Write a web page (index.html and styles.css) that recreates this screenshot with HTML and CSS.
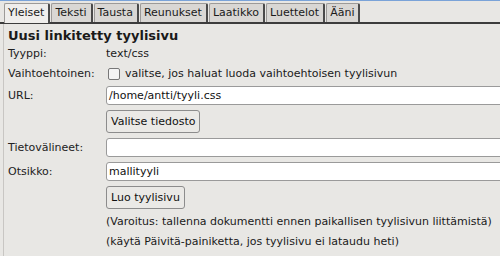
FILE: index.html
```html
<!DOCTYPE html>
<html lang="fi">
<head>
  <meta charset="UTF-8">
  <title>Uusi linkitetty tyylisivu</title>
  <link rel="stylesheet" href="styles.css">
</head>
<body>

<div class="dialog">
  <div class="tabs">
    <span class="tab active">Yleiset</span>
    <span class="tab">Teksti</span>
    <span class="tab">Tausta</span>
    <span class="tab">Reunukset</span>
    <span class="tab">Laatikko</span>
    <span class="tab">Luettelot</span>
    <span class="tab">Ääni</span>
  </div>

  <div class="panel">
    <h2>Uusi linkitetty tyylisivu</h2>

    <div class="form">
      <span class="label">Tyyppi:</span>
      <span class="value">text/css</span>

      <span class="label">Vaihtoehtoinen:</span>
      <label class="check"><span class="box"></span>valitse, jos haluat luoda vaihtoehtoisen tyylisivun</label>

      <span class="label">URL:</span>
      <div class="field">/home/antti/tyyli.css</div>

      <span></span>
      <div><button class="btn">Valitse tiedosto</button></div>

      <span class="label">Tietovälineet:</span>
      <div class="field"></div>

      <span class="label">Otsikko:</span>
      <div class="field">mallityyli</div>

      <span></span>
      <div><button class="btn">Luo tyylisivu</button></div>

      <span></span>
      <div class="note">
        <p>(Varoitus: tallenna dokumentti ennen paikallisen tyylisivun liittämistä)</p>
        <p>(käytä Päivitä-painiketta, jos tyylisivu ei lataudu heti)</p>
      </div>
    </div>
  </div>
</div>

</body>
</html>
```

FILE: styles.css
```css
body {
  margin: 0;
  font-family: 'DejaVu Sans', sans-serif;
  font-size: 11px;
  color: #1a1a1a;
  background: #e8e7e4;
  overflow: hidden;
}
.dialog {
  width: 500px;
  height: 256px;
  border-top: 1px solid #7aa3d8;
  box-sizing: border-box;
  overflow: hidden;
}
.tabs {
  display: flex;
  align-items: flex-end;
  padding: 1px 0 0 4px;
  height: 20px;
  border-bottom: 2px solid #3c3c3c;
}
.tab {
  height: 18px;
  line-height: 18px;
  padding: 0 4px 0 3px;
  background: #d9d7d4;
  border: 1px solid #9c9a98;
  border-right: 2px solid #4a4a4a;
  border-bottom: none;
  border-radius: 2px 2px 0 0;
  margin-right: 1px;
}
.tab.active {
  background: #efeeec;
  height: 19px;
  margin-bottom: -1px;
}
.panel {
  margin-left: 3px;
  border-left: 1px solid #c8c6c3;
  padding: 3px 0 0 4px;
  height: 230px;
}
h2 {
  margin: 0 0 2px 0;
  font-size: 13px;
  line-height: 17px;
  font-weight: bold;
}
.form {
  display: grid;
  grid-template-columns: 98px 420px;
  align-items: center;
  row-gap: 5px;
  line-height: 15px;
}
.label {
  color: #222;
}
.check {
  display: flex;
  align-items: center;
}
.box {
  width: 10px;
  height: 10px;
  border: 1px solid #777;
  border-radius: 2px;
  background: #f4f4f4;
  margin: 0 5px 0 2px;
}
.field {
  height: 17px;
  line-height: 17px;
  border: 1px solid #9a9a9a;
  border-radius: 3px;
  background: #fff;
  padding: 0 2px;
  color: #111;
}
.btn {
  display: block;
  font-family: 'DejaVu Sans', sans-serif;
  font-size: 11px;
  color: #111;
  background: #eae9e6;
  border: 1px solid #8c8c8c;
  border-radius: 3px;
  height: 23px;
  padding: 0 4px;
}
.note p {
  margin: 0;
  line-height: 15px;
}
.note p + p {
  margin-top: 5px;
}
```
